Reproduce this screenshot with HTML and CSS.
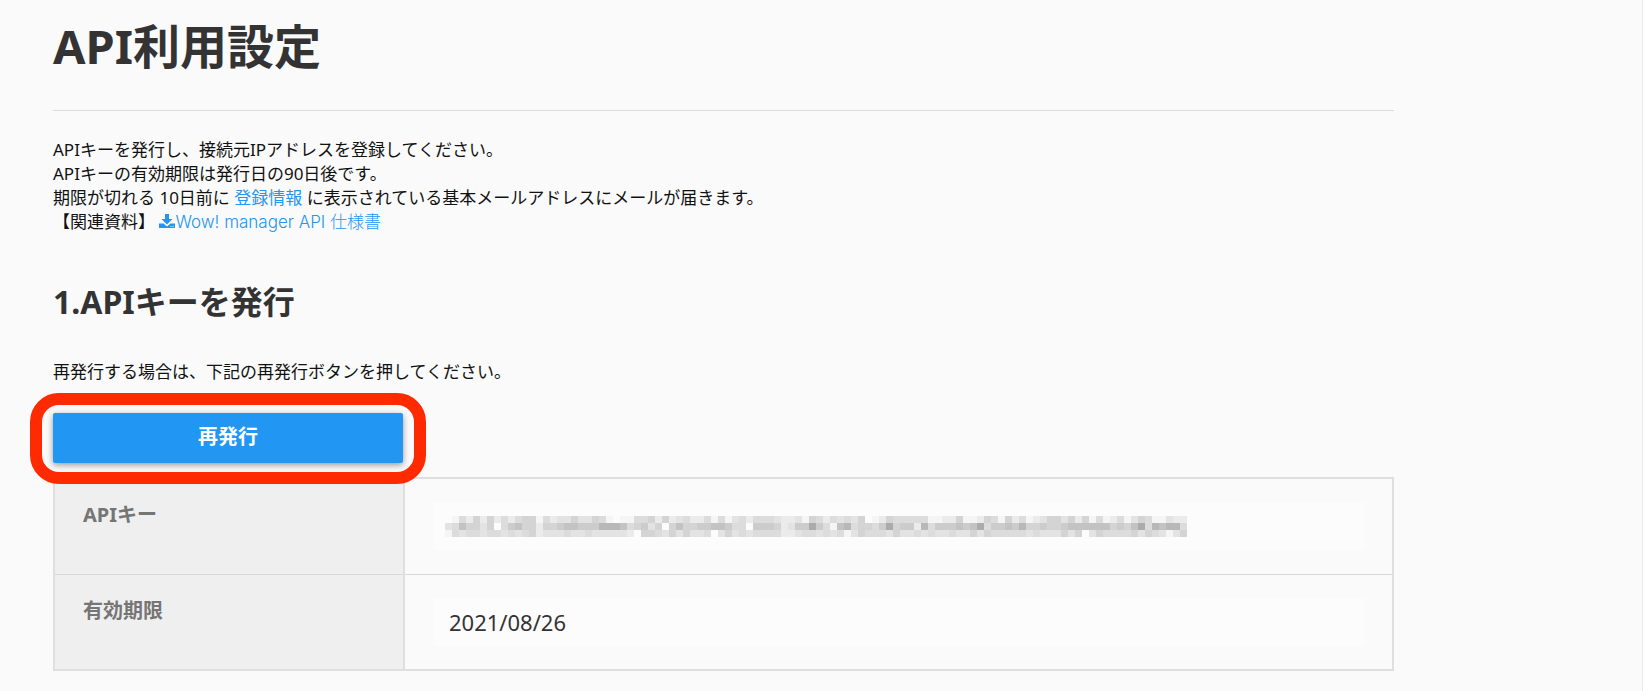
FILE: index.html
```html
<!DOCTYPE html>
<html lang="ja">
<head>
    <meta charset="UTF-8">
    <meta name="viewport" content="width=device-width, initial-scale=1.0">
    <title>API利用設定</title>
    <link rel="stylesheet" href="styles.css">
</head>
<body>
    <main class="container">
        <h1>API利用設定</h1>

        <p class="lead">
            APIキーを発行し、接続元IPアドレスを登録してください。<br>
            APIキーの有効期限は発行日の90日後です。<br>
            期限が切れる 10日前に <a href="#">登録情報</a> に表示されている基本メールアドレスにメールが届きます。<br>
            【関連資料】
            <a class="download" href="#"><svg class="download-icon" viewBox="0 0 16 14" aria-hidden="true"><path d="M6 0h4v5h3.500L8 10.500 2.500 5H6z"/><path d="M0 9.500h4.500L8 12.500l3.500-3H16V14H0zM11.500 12v1h1v-1zM13.500 12v1h1v-1z" fill-rule="evenodd"/></svg>Wow! manager API 仕様書</a>
        </p>

        <h2>1.APIキーを発行</h2>
        <p class="note">再発行する場合は、下記の再発行ボタンを押してください。</p>

        <div class="reissue">
            <button type="button" class="reissue-button">再発行</button>
            <span class="highlight"></span>
        </div>

        <table class="api-table">
            <tr>
                <th scope="row">APIキー</th>
                <td><div class="masked-key"><svg id="key-mask" viewBox="0 0 742 21" role="img" aria-label="APIキー"></svg></div></td>
            </tr>
            <tr>
                <th scope="row"><label for="expiry">有効期限</label></th>
                <td><input type="text" id="expiry" class="value" value="2021/08/26" readonly></td>
            </tr>
        </table>
    </main>

    <script>
        // Masked API key: each digit is the darkness of one block
        const maskRows = [
            '014252524245514233533541011445252342' + '241413424443223154243435012544444112' + '2511254152412355352514124135411322',
            '347553504675525567766688874563505755' + '667764406665236696417845546956628466' + '6767946676855655677777756579487884',
            '143443443434523334334333332055435353' + '340353434444223443434135444353343433' + '4335354444434333535035444453543135'
        ];
        const shades = ['#fcfcfc', '#f5f5f5', '#ebebeb', '#e3e3e3', '#dcdcdc', '#d4d4d4', '#cccccc', '#c3c3c3', '#b8b8b8', '#ababab'];
        const mask = document.getElementById('key-mask');

        maskRows.forEach((row, y) => {
            [...row].forEach((level, x) => {
                const block = document.createElementNS('http://www.w3.org/2000/svg', 'rect');
                block.setAttribute('x', x * 7);
                block.setAttribute('y', y * 7);
                block.setAttribute('width', 7);
                block.setAttribute('height', 7);
                block.setAttribute('fill', shades[level]);
                mask.appendChild(block);
            });
        });
    </script>
</body>
</html>
```
FILE: styles.css
```css
* {
    box-sizing: border-box;
}

body {
    min-height: 100vh;
    margin: 0;
    background-color: #fafafa;
    border-right: 1px solid #e8e8e8;
    color: #111;
    font-family: "Noto Sans", "Noto Sans CJK JP", sans-serif;
    font-size: 17px;
    line-height: 24px;
}

.container {
    padding: 14px 248px 16px 53px;
}

h1 {
    margin: 0 0 27px;
    padding-bottom: 32px;
    border-bottom: 1px solid #ddd;
    color: #333;
    font-size: 47px;
    line-height: 64px;
}

h2 {
    margin: 0;
    color: #333;
    font-size: 32px;
    line-height: 48px;
}

p {
    margin: 0;
}

a {
    color: #2196f3;
    text-decoration: none;
}

.lead {
    margin-bottom: 44px;
}

.download {
    font-family: Inter, "Noto Sans CJK JP", sans-serif;
    font-weight: 300;
}

.download-icon {
    width: 16px;
    height: 14px;
    fill: #2196f3;
}

.note {
    margin-top: 34px;
}

.reissue {
    position: relative;
    width: 350px;
    margin: 29px 0 14px;
}

.reissue-button {
    display: block;
    width: 100%;
    height: 50px;
    padding: 0 0 6px;
    border: none;
    border-radius: 2px;
    background-color: #2196f3;
    box-shadow: 0 2px 6px rgba(0, 0, 0, 0.4);
    color: #fff;
    font-family: inherit;
    font-size: 20px;
    font-weight: bold;
    cursor: pointer;
}

/* Red frame round the reissue button */
.highlight {
    position: absolute;
    inset: -20px -23px -21px;
    border: 12px solid #ff2a00;
    border-radius: 29px;
    pointer-events: none;
}

.api-table {
    width: 100%;
    border: 2px solid #dfdfdf;
    border-collapse: collapse;
    table-layout: fixed;
}

.api-table th,
.api-table td {
    height: 96px;
    border-bottom: 1px solid #d8d8d8;
    vertical-align: top;
}

.api-table th {
    width: 350px;
    padding: 24px 28px;
    border-right: 2px solid #dfdfdf;
    background-color: #efefef;
    color: #757575;
    font-size: 20px;
    text-align: left;
}

.api-table td {
    padding: 23px 28px;
}

.masked-key,
.value {
    display: block;
    width: 100%;
    height: 48px;
    border: none;
    background-color: #fcfcfc;
}

.masked-key {
    padding: 14px 12px;
}

.masked-key svg {
    display: block;
    width: 742px;
    max-width: 100%;
    height: 21px;
}

.value {
    padding: 0 16px;
    color: #333;
    font-family: inherit;
    font-size: 22px;
}
```
